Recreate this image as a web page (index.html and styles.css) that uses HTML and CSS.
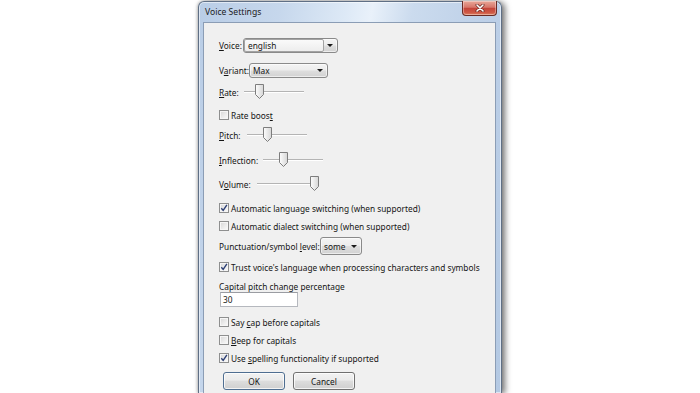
FILE: index.html
```html
<!DOCTYPE html>
<html>
<head>
<meta charset="utf-8">
<title>Voice Settings</title>
<link rel="stylesheet" href="styles.css">
</head>
<body>
<div class="window">
  <div class="titlebar">
    <span class="title">Voice Settings</span>
    <div class="close">
      <svg width="10" height="8" viewBox="0 0 10 8"><path d="M2 1 L8 7 M8 1 L2 7" stroke="#6b2a22" stroke-width="3" stroke-linecap="round"/><path d="M2 1 L8 7 M8 1 L2 7" stroke="#ffffff" stroke-width="1.6" stroke-linecap="round"/></svg>
    </div>
  </div>
  <div class="client">
    <div class="row r-voice">
      <span class="lbl w-voice"><u>V</u>oice:</span>
      <div class="combo c-voice"><span class="field">english</span><span class="arrow"></span></div>
    </div>
    <div class="row r-variant">
      <span class="lbl w-variant">V<u>a</u>riant:</span>
      <div class="combo c-variant"><span class="text">Max</span><span class="arrow"></span></div>
    </div>
    <div class="row r-rate">
      <span class="lbl w-rate"><u>R</u>ate:</span>
      <div class="slider"><span class="thumb" style="left:10.5px"><svg width="9" height="15" viewBox="0 0 9 15"><defs><linearGradient id="tg1" x1="0" y1="0" x2="1" y2="0"><stop offset="0" stop-color="#fdfdfd"/><stop offset="1" stop-color="#d6d6d6"/></linearGradient></defs><path d="M0.5 0.5 H8.5 V10.5 L4.5 14.5 L0.5 10.5 Z" fill="url(#tg1)" stroke="#7d7d7d"/></svg></span></div>
    </div>
    <div class="row r-boost">
      <span class="cb"></span><span>Rate boos<u>t</u></span>
    </div>
    <div class="row r-pitch">
      <span class="lbl w-pitch"><u>P</u>itch:</span>
      <div class="slider"><span class="thumb" style="left:15.5px"><svg width="9" height="15" viewBox="0 0 9 15"><path d="M0.5 0.5 H8.5 V10.5 L4.5 14.5 L0.5 10.5 Z" fill="url(#tg1)" stroke="#7d7d7d"/></svg></span></div>
    </div>
    <div class="row r-infl">
      <span class="lbl w-infl"><u>I</u>nflection:</span>
      <div class="slider"><span class="thumb" style="left:15.5px"><svg width="9" height="15" viewBox="0 0 9 15"><path d="M0.5 0.5 H8.5 V10.5 L4.5 14.5 L0.5 10.5 Z" fill="url(#tg1)" stroke="#7d7d7d"/></svg></span></div>
    </div>
    <div class="row r-vol">
      <span class="lbl w-vol">V<u>o</u>lume:</span>
      <div class="slider"><span class="thumb" style="left:52.5px"><svg width="9" height="15" viewBox="0 0 9 15"><path d="M0.5 0.5 H8.5 V10.5 L4.5 14.5 L0.5 10.5 Z" fill="url(#tg1)" stroke="#7d7d7d"/></svg></span></div>
    </div>
    <div class="row r-lang">
      <span class="cb"><svg width="8" height="8" viewBox="0 0 8 8"><path d="M1.3 4.2 L3.2 6.4 L6.9 0.9" fill="none" stroke="#2c3f74" stroke-width="1.4"/></svg></span><span>Automatic language switching (when supported)</span>
    </div>
    <div class="row r-dialect">
      <span class="cb"></span><span>Automatic dialect switching (when supported)</span>
    </div>
    <div class="row r-punct">
      <span class="lbl w-punct">Punctuation/symbol <u>l</u>evel:</span>
      <div class="combo c-punct"><span class="text">some</span><span class="arrow"></span></div>
    </div>
    <div class="row r-trust">
      <span class="cb"><svg width="8" height="8" viewBox="0 0 8 8"><path d="M1.3 4.2 L3.2 6.4 L6.9 0.9" fill="none" stroke="#2c3f74" stroke-width="1.4"/></svg></span><span>Trust voice's language when processing characters and symbols</span>
    </div>
    <div class="row r-caplbl">
      <span>Capital pitch change percentage</span>
    </div>
    <div class="row r-edit">
      <div class="edit">30</div>
    </div>
    <div class="row r-saycap">
      <span class="cb"></span><span>Say <u>c</u>ap before capitals</span>
    </div>
    <div class="row r-beep">
      <span class="cb"></span><span><u>B</u>eep for capitals</span>
    </div>
    <div class="row r-spell">
      <span class="cb"><svg width="8" height="8" viewBox="0 0 8 8"><path d="M1.3 4.2 L3.2 6.4 L6.9 0.9" fill="none" stroke="#2c3f74" stroke-width="1.4"/></svg></span><span>Use <u>s</u>pelling functionality if supported</span>
    </div>
    <div class="row r-buttons">
      <div class="btn btn-default">OK</div>
      <div class="btn">Cancel</div>
    </div>
  </div>
</div>
</body>
</html>
```

FILE: styles.css
```css
html, body {
  margin: 0;
  padding: 0;
}
body {
  width: 700px;
  height: 393px;
  overflow: hidden;
  background: #ffffff;
  display: flex;
  justify-content: center;
  font-family: "Noto Sans", "Open Sans", sans-serif;
  font-size: 8.3px;
  color: #151515;
}
u {
  text-decoration-thickness: 1px;
  text-underline-offset: 1px;
}
.window {
  width: 304px;
  height: 392px;
  box-sizing: border-box;
  margin-top: 1px;
  border: 1px solid #5f6f85;
  border-bottom: none;
  border-radius: 6px 6px 0 0;
  padding: 0 5px 0 4px;
  background: linear-gradient(100deg, #b9cde6 0%, #c6d7ec 22%, #dde9f6 40%, #e9f1fa 47%, #cbdbee 58%, #bccfe7 80%, #b4c9e3 100%);
  box-shadow: inset 0 0 0 1px rgba(255,255,255,0.55), 3px 1px 6px rgba(0,0,0,0.55), -1px 0 3px rgba(0,0,0,0.2);
  display: flex;
  flex-direction: column;
}
.titlebar {
  height: 20px;
  flex: none;
  display: flex;
  align-items: flex-start;
  margin-right: -1px;
}
.title {
  margin-left: 2px;
  line-height: 20px;
  font-size: 8.6px;
  color: #1b1b1b;
}
.close {
  margin-left: auto;
  margin-top: -1px;
  width: 35px;
  height: 15px;
  box-sizing: border-box;
  border: 1px solid #6a2c25;
  border-top: none;
  border-radius: 0 0 4px 4px;
  background: linear-gradient(#e9a898 0%, #d7766a 45%, #c4453a 52%, #cf5b47 85%, #e08a6a 100%);
  box-shadow: inset 0 0 0 1px rgba(255,255,255,0.35);
  display: flex;
  align-items: center;
  justify-content: center;
}
.client {
  flex: 1;
  min-height: 0;
  overflow: hidden;
  background: #f0f0f0;
  border: 1px solid #8b9db5;
  border-bottom: none;
  padding: 14px 0 0 15px;
}
.row {
  display: flex;
  align-items: center;
  height: 16px;
  white-space: nowrap;
}
.r-variant { margin-top: 9px; }
.r-rate { margin-top: 6px; }
.r-boost { margin-top: 8px; height: 14px; }
.r-pitch { margin-top: 5px; }
.r-infl { margin-top: 9px; }
.r-vol { margin-top: 8px; }
.r-lang { margin-top: 9px; height: 14px; }
.r-dialect { margin-top: 4px; height: 14px; }
.r-punct { margin-top: 4px; height: 18px; }
.r-trust { margin-top: 5px; height: 14px; }
.r-caplbl { margin-top: 6px; height: 12px; }
.r-edit { margin-top: 0; height: 15px; }
.r-saycap { margin-top: 8px; height: 14px; }
.r-beep { margin-top: 4px; height: 14px; }
.r-spell { margin-top: 4px; height: 14px; }
.r-buttons { margin-top: 7px; height: 18px; padding-left: 4px; gap: 8px; }

.lbl { display: inline-block; flex: none; overflow: visible; }
.w-voice { width: 24px; }
.w-variant { width: 30px; }
.w-rate { width: 25px; }
.w-pitch { width: 28px; }
.w-infl { width: 44px; }
.w-vol { width: 38px; }
.w-punct { width: 101px; }

.combo {
  position: relative;
  flex: none;
  box-sizing: border-box;
  border: 1px solid #8a8a8a;
  border-radius: 3px;
  background: linear-gradient(#f4f4f4 0%, #ececec 48%, #dedede 52%, #d2d2d2 100%);
  box-shadow: inset 0 0 0 1px rgba(255,255,255,0.6);
  display: flex;
  align-items: center;
}
.c-voice { width: 95px; height: 15px; }
.c-variant { width: 79px; height: 15px; }
.c-punct { width: 42px; height: 18px; }
.combo .field {
  box-sizing: border-box;
  width: 80px;
  height: 13px;
  padding-left: 3px;
  border: 1px solid #a3a3a3;
  border-radius: 2px;
  background: linear-gradient(#fafafa, #ededed);
  line-height: 11px;
}
.combo .text {
  padding-left: 3px;
  flex: 1;
}
.arrow {
  flex: none;
  margin-left: auto;
  margin-right: 4px;
  width: 0;
  height: 0;
  border-left: 3px solid transparent;
  border-right: 3px solid transparent;
  border-top: 3px solid #1a1a1a;
}

.slider {
  position: relative;
  width: 60px;
  height: 16px;
  flex: none;
}
.slider::before {
  content: "";
  position: absolute;
  left: 0;
  right: 0;
  top: 7px;
  height: 1px;
  background: #b4b4b4;
  border-bottom: 1px solid #ffffff;
}
.thumb {
  position: absolute;
  top: 0;
  width: 9px;
  height: 15px;
  display: block;
}
.thumb svg { display: block; }

.cb {
  flex: none;
  width: 10px;
  height: 10px;
  box-sizing: border-box;
  margin-right: 2px;
  border: 1px solid #8e8f8f;
  background: linear-gradient(135deg, #d6d6d6 0%, #eeeeee 60%, #fbfbfb 100%);
  box-shadow: inset 0 0 0 1px #f6f6f6;
  display: flex;
  align-items: center;
  justify-content: center;
}
.cb svg { display: block; }

.edit {
  margin-left: 1px;
  width: 78px;
  height: 15px;
  box-sizing: border-box;
  border: 1px solid #b5b8be;
  border-top-color: #9a9ca2;
  background: #ffffff;
  padding-left: 2px;
  display: flex;
  align-items: center;
}

.btn {
  width: 62px;
  height: 18px;
  box-sizing: border-box;
  border: 1px solid #707070;
  border-radius: 3px;
  background: linear-gradient(#f2f2f2 0%, #ebebeb 45%, #dddddd 50%, #cfcfcf 100%);
  box-shadow: inset 0 0 0 1px rgba(255,255,255,0.75);
  display: flex;
  align-items: center;
  justify-content: center;
}
.btn-default {
  border-color: #4f6e91;
}
```
